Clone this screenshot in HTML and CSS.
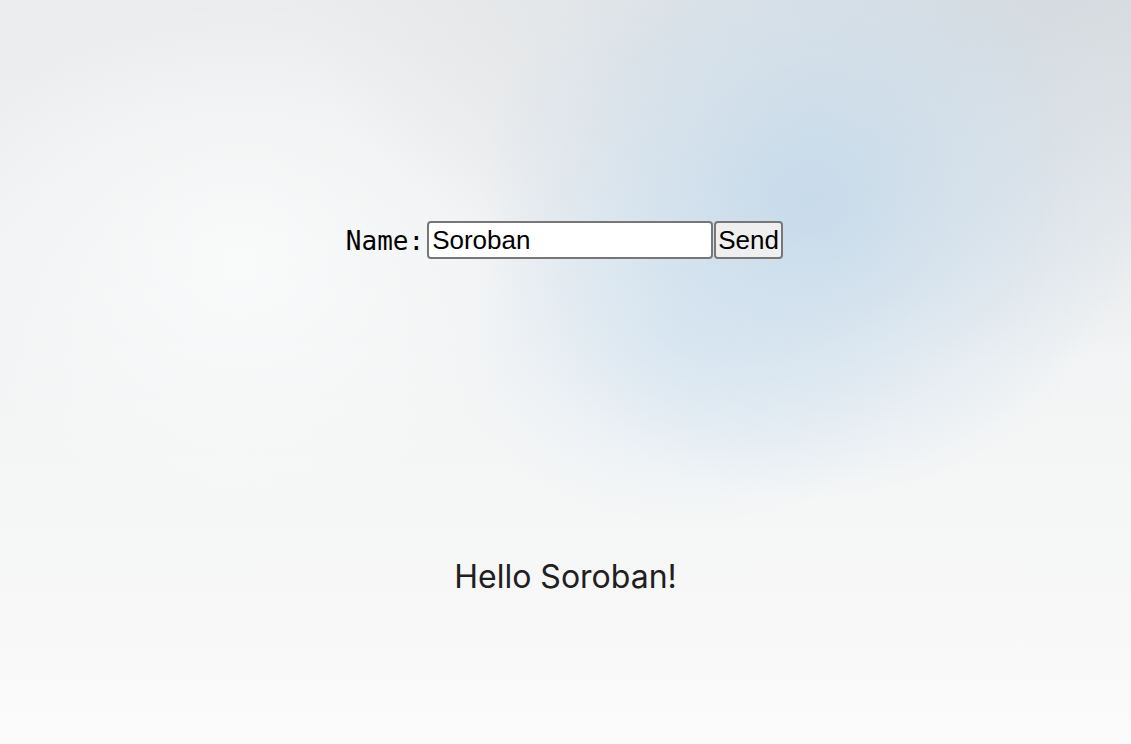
FILE: index.html
```html
<!DOCTYPE html>
<html lang="en">
<head>
<meta charset="utf-8">
<title>Soroban</title>
<link rel="stylesheet" href="styles.css">
</head>
<body>
<main class="page">
  <form class="greet-form">
    <label class="label" for="name">Name:</label>
    <input class="name-input" id="name" type="text" value="Soroban">
    <button class="send-btn" type="button">Send</button>
  </form>
  <p class="greeting">Hello Soroban!</p>
</main>
</body>
</html>
```

FILE: styles.css
```css
html, body {
  margin: 0;
  padding: 0;
  height: 100%;
}

body {
  background-color: #f6f7f7;
  background-image:
    radial-gradient(ellipse 330px 300px at 810px 200px, rgba(196, 217, 234, 0.9) 0%, rgba(200, 220, 236, 0.55) 45%, rgba(205, 222, 236, 0) 100%),
    radial-gradient(ellipse 240px 200px at 690px 330px, rgba(210, 228, 242, 0.55), rgba(210, 228, 242, 0) 100%),
    radial-gradient(ellipse 760px 360px at 1060px 0px, rgba(212, 218, 223, 0.95), rgba(212, 218, 223, 0) 100%),
    radial-gradient(ellipse 300px 260px at 240px 260px, rgba(250, 251, 251, 0.85), rgba(250, 251, 251, 0) 100%),
    linear-gradient(180deg, #ebeced 0%, #f1f2f3 35%, #f5f6f6 65%, #f8f8f8 85%, #fbfbfb 100%);
  font-family: "Liberation Sans", Arial, sans-serif;
}

.page {
  display: flex;
  flex-direction: column;
  align-items: center;
  padding-top: 221px;
}

.greet-form {
  display: flex;
  align-items: center;
  margin: 0 0 0 -2px;
}

.label {
  font-family: "DejaVu Sans Mono", "Liberation Mono", monospace;
  font-size: 26px;
  color: #000;
  margin-right: 3px;
  padding-top: 1px;
}

.name-input {
  box-sizing: border-box;
  width: 286px;
  height: 38px;
  font-family: "Liberation Sans", Arial, sans-serif;
  font-size: 26px;
  color: #000;
  background: #fff;
  border: 2px solid #777;
  border-radius: 4px;
  padding: 0 3px;
  margin: 0;
}

.send-btn {
  box-sizing: border-box;
  height: 38px;
  width: 69px;
  font-family: "Liberation Sans", Arial, sans-serif;
  font-size: 26px;
  color: #000;
  background: #efefef;
  border: 2px solid #777;
  border-radius: 4px;
  padding: 0 1px;
  margin: 0 0 0 1px;
}

.greeting {
  font-family: Inter, "Liberation Sans", sans-serif;
  font-size: 32px;
  line-height: 40px;
  color: #1f2021;
  margin: 298px 0 0;
}
```
